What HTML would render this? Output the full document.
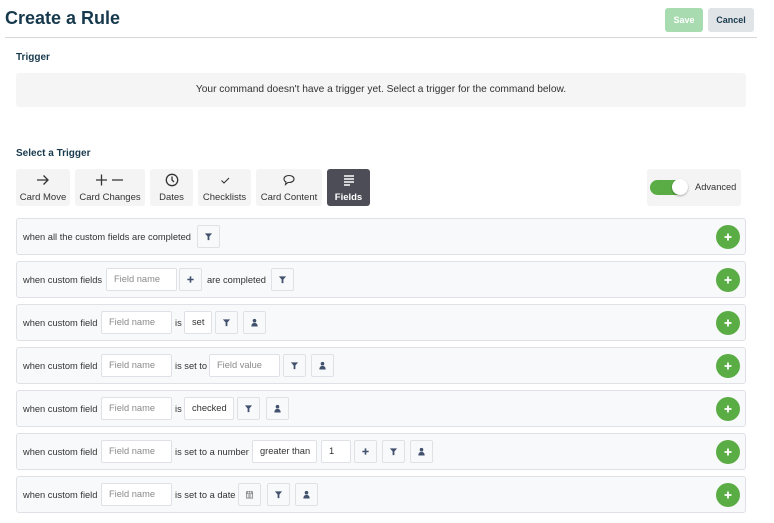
<!DOCTYPE html>
<html><head><meta charset="utf-8"><style>
*{box-sizing:border-box;margin:0;padding:0}
body{width:774px;height:523px;background:#fff;font-family:"Liberation Sans",sans-serif;position:relative;overflow:hidden;color:#172b4d}
.a{position:absolute}
h1{position:absolute;left:5px;top:8px;font-size:18px;font-weight:bold;color:#17394d}
.hr{left:5px;top:37px;width:752px;height:1px;background:#d6d6d6}
.btn{border-radius:3px;font-size:9px;font-weight:bold;display:flex;align-items:center;justify-content:center}
.lbl{font-size:10px;font-weight:bold;color:#17394d}
.tab{top:169px;height:37px;background:#f4f4f4;border-radius:3px;font-size:9.5px;color:#333;text-align:center}
.tab svg{position:absolute;left:50%;top:4px;transform:translateX(-50%)}
.tab span{position:absolute;left:0;right:0;top:23px}
.row{left:16px;width:730px;height:37px;background:#f8f9fa;border:1px solid #dfe1e6;border-radius:3px}
.t{position:absolute;top:13px;font-size:9.3px;color:#333;white-space:nowrap}
.in{position:absolute;top:6px;height:23px;background:#fff;border:1px solid #dfe1e6;border-radius:2px;font-size:9.3px;color:#8a8a8a;padding-left:7px;line-height:21px;white-space:nowrap}
.ic{position:absolute;top:6px;width:23px;height:23px;border:1px solid #dfe1e6;border-radius:2px;background:#f8f9fa;display:flex;align-items:center;justify-content:center}
.add{position:absolute;right:5px;top:6px;width:24px;height:24px;border-radius:50%;background:#5aac44;display:flex;align-items:center;justify-content:center}
</style></head><body>
<h1>Create a Rule</h1>
<div class="a hr"></div>
<div class="a btn" style="left:665px;top:8px;width:38px;height:24px;background:#a8dbb0;color:#fff">Save</div>
<div class="a btn" style="left:708px;top:8px;width:46px;height:24px;background:#e1e4e7;color:#17394d">Cancel</div>
<div class="a lbl" style="left:16px;top:52px">Trigger</div>
<div class="a" style="left:16px;top:73px;width:730px;height:34px;background:#f5f5f5;border-radius:3px;font-size:10.2px;color:#333;text-align:center;line-height:34px">Your command doesn't have a trigger yet. Select a trigger for the command below.</div>
<div class="a lbl" style="left:16px;top:148px">Select a Trigger</div>

<div class="a tab" style="left:16px;width:54px"><svg width="14" height="14" viewBox="0 0 14 14"><path d="M1 7h11M7.5 2.5 12 7l-4.5 4.5" stroke="#333" stroke-width="1.3" fill="none"/></svg><span>Card Move</span></div>
<div class="a tab" style="left:75px;width:70px"><svg width="30" height="14" viewBox="0 0 30 14"><path d="M1 7h11M6.5 1.5v11M17 7h11" stroke="#333" stroke-width="1.3" fill="none"/></svg><span>Card Changes</span></div>
<div class="a tab" style="left:150px;width:43px"><svg width="14" height="14" viewBox="0 0 14 14"><circle cx="7" cy="7" r="5.7" stroke="#333" stroke-width="1.3" fill="none"/><path d="M7 3.5V7l2 2" stroke="#333" stroke-width="1.3" fill="none"/></svg><span>Dates</span></div>
<div class="a tab" style="left:198px;width:53px"><svg width="14" height="14" viewBox="0 0 14 14"><path d="M3.5 7.5l2.5 2.5 5-5" stroke="#333" stroke-width="1.1" fill="none"/></svg><span>Checklists</span></div>
<div class="a tab" style="left:256px;width:66px"><svg width="14" height="14" viewBox="0 0 14 14"><path d="M7 2.5c3 0 5 1.5 5 3.5s-2 3.5-5 3.5H6l-2.5 2 .5-2.5C2.8 8.4 2 7.3 2 6c0-2 2-3.5 5-3.5z" stroke="#333" stroke-width="1.1" fill="none"/></svg><span>Card Content</span></div>
<div class="a tab" style="left:327px;width:43px;background:#4d4d57;color:#fff;font-weight:bold"><svg width="14" height="14" viewBox="0 0 14 14"><path d="M2 3h10M2 6h10M2 9h10M2 12h6" stroke="#fff" stroke-width="1.5"/></svg><span>Fields</span></div>

<div class="a" style="left:647px;top:169px;width:94px;height:37px;background:#f4f4f4;border-radius:3px">
<div class="a" style="left:3px;top:11px;width:37px;height:15px;border-radius:8px;background:#5aac44"></div>
<div class="a" style="left:25px;top:10px;width:16px;height:16px;border-radius:50%;background:#fff;box-shadow:0 1px 2px rgba(0,0,0,.3)"></div>
<div class="a" style="left:48px;top:13px;font-size:9.3px;color:#333">Advanced</div>
</div>

<svg width="0" height="0" style="position:absolute"><defs>
<symbol id="f" viewBox="0 0 10 10"><path d="M1 1.5h8L6 5v4H4V5z" fill="#42526e"/></symbol>
<symbol id="p" viewBox="0 0 10 10"><circle cx="5" cy="3" r="2" fill="#42526e"/><path d="M1.5 9.5c0-3 1.5-4 3.5-4s3.5 1 3.5 4z" fill="#42526e"/></symbol>
<symbol id="pl" viewBox="0 0 10 10"><path d="M5 1.5v7M1.5 5h7" stroke="#42526e" stroke-width="1.8"/></symbol>
<symbol id="c" viewBox="0 0 10 10"><rect x="1.5" y="2" width="7" height="7" fill="none" stroke="#777" stroke-width=".8"/><path d="M3 1v3M5 1v3M7 1v3M1.5 4h7M3.5 4v5M5 4v5M6.5 4v5" stroke="#777" stroke-width=".6"/></symbol>
<symbol id="w" viewBox="0 0 10 10"><path d="M5 1.5v7M1.5 5h7" stroke="#fff" stroke-width="1.8"/></symbol>
</defs></svg>

<div class="a row" style="top:218px"><span class="t" style="left:6px">when all the custom fields are completed</span><div class="ic" style="left:180px"><svg width="9" height="9"><use href="#f"/></svg></div><div class="add"><svg width="10" height="10"><use href="#w"/></svg></div></div>

<div class="a row" style="top:261px"><span class="t" style="left:6px">when custom fields</span><div class="in" style="left:89px;width:71px">Field name</div><div class="ic" style="left:162px"><svg width="9" height="9"><use href="#pl"/></svg></div><span class="t" style="left:190px">are completed</span><div class="ic" style="left:254px"><svg width="9" height="9"><use href="#f"/></svg></div><div class="add"><svg width="10" height="10"><use href="#w"/></svg></div></div>

<div class="a row" style="top:304px"><span class="t" style="left:6px">when custom field</span><div class="in" style="left:84px;width:71px">Field name</div><span class="t" style="left:158px">is</span><div class="in" style="left:167px;width:28px;color:#333">set</div><div class="ic" style="left:198px"><svg width="9" height="9"><use href="#f"/></svg></div><div class="ic" style="left:226px"><svg width="9" height="9"><use href="#p"/></svg></div><div class="add"><svg width="10" height="10"><use href="#w"/></svg></div></div>

<div class="a row" style="top:347px"><span class="t" style="left:6px">when custom field</span><div class="in" style="left:84px;width:71px">Field name</div><span class="t" style="left:158px">is set to</span><div class="in" style="left:192px;width:71px">Field value</div><div class="ic" style="left:266px"><svg width="9" height="9"><use href="#f"/></svg></div><div class="ic" style="left:294px"><svg width="9" height="9"><use href="#p"/></svg></div><div class="add"><svg width="10" height="10"><use href="#w"/></svg></div></div>

<div class="a row" style="top:390px"><span class="t" style="left:6px">when custom field</span><div class="in" style="left:84px;width:71px">Field name</div><span class="t" style="left:158px">is</span><div class="in" style="left:167px;width:50px;color:#333">checked</div><div class="ic" style="left:220px"><svg width="9" height="9"><use href="#f"/></svg></div><div class="ic" style="left:249px"><svg width="9" height="9"><use href="#p"/></svg></div><div class="add"><svg width="10" height="10"><use href="#w"/></svg></div></div>

<div class="a row" style="top:433px"><span class="t" style="left:6px">when custom field</span><div class="in" style="left:84px;width:71px">Field name</div><span class="t" style="left:158px">is set to a number</span><div class="in" style="left:235px;width:65px;color:#333">greater than</div><div class="in" style="left:304px;width:30px;color:#333">1</div><div class="ic" style="left:337px"><svg width="9" height="9"><use href="#pl"/></svg></div><div class="ic" style="left:365px"><svg width="9" height="9"><use href="#f"/></svg></div><div class="ic" style="left:393px"><svg width="9" height="9"><use href="#p"/></svg></div><div class="add"><svg width="10" height="10"><use href="#w"/></svg></div></div>

<div class="a row" style="top:476px"><span class="t" style="left:6px">when custom field</span><div class="in" style="left:84px;width:71px">Field name</div><span class="t" style="left:158px">is set to a date</span><div class="ic" style="left:221px"><svg width="9" height="9"><use href="#c"/></svg></div><div class="ic" style="left:250px"><svg width="9" height="9"><use href="#f"/></svg></div><div class="ic" style="left:278px"><svg width="9" height="9"><use href="#p"/></svg></div><div class="add"><svg width="10" height="10"><use href="#w"/></svg></div></div>
</body></html>
